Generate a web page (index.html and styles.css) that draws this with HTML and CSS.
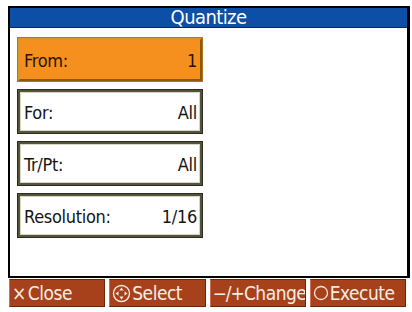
FILE: index.html
```html
<!DOCTYPE html>
<html>
<head>
<meta charset="utf-8">
<link rel="stylesheet" href="styles.css">
</head>
<body>
<div class="screen">
  <div class="window">
    <div class="title">Quantize</div>
    <div class="content">
      <div class="row selected"><span>From:</span><span>1</span></div>
      <div class="row"><span>For:</span><span>All</span></div>
      <div class="row"><span>Tr/Pt:</span><span>All</span></div>
      <div class="row"><span>Resolution:</span><span>1/16</span></div>
    </div>
  </div>
  <div class="footer">
    <div class="btn"><span class="x">×</span>Close</div>
    <div class="btn"><svg class="ico" width="19" height="19" viewBox="0 0 19 19"><circle cx="9.5" cy="9.5" r="8" fill="none" stroke="#f6e6dc" stroke-width="1.4"/><polygon points="9.5,3.5 7.3,6.5 11.7,6.5" fill="#f6e6dc"/><polygon points="9.5,15.5 7.3,12.5 11.7,12.5" fill="#f6e6dc"/><polygon points="3.5,9.5 6.5,7.3 6.5,11.7" fill="#f6e6dc"/><polygon points="15.5,9.5 12.5,7.3 12.5,11.7" fill="#f6e6dc"/></svg>Select</div>
    <div class="btn"><span class="pm">−/+</span>Change</div>
    <div class="btn"><svg class="ico" width="16" height="16" viewBox="0 0 16 16"><circle cx="8" cy="8" r="6.5" fill="none" stroke="#f6e6dc" stroke-width="1.3"/></svg>Execute</div>
  </div>
</div>
</body>
</html>
```
FILE: styles.css
```css
html, body {
  margin: 0;
  padding: 0;
  background: #ffffff;
}
body {
  font-family: "DejaVu Sans Condensed", "DejaVu Sans", "Liberation Sans Narrow", sans-serif;
}
.screen {
  margin: 6px 0 0 8px;
  width: 402px;
}
.window {
  border: 2px solid #000;
  border-right-width: 3px;
  height: 268px;
  background: #fff;
  display: flex;
  flex-direction: column;
}
.title {
  height: 19px;
  background: #0d4ea6;
  border-bottom: 1px solid #0a2a5a;
  color: #ffffff;
  font-size: 20px;
  line-height: 19px;
  text-align: center;
  letter-spacing: -0.6px;
}
.content {
  padding: 9px 0 0 7px;
  display: flex;
  flex-direction: column;
  gap: 7px;
}
.row {
  width: 173px;
  height: 38px;
  border: 3px solid #55543a;
  box-shadow: inset 0 0 0 1px #d8d6c0;
  outline: 1px solid #2a2a20;
  outline-offset: -1px;
  display: flex;
  align-items: center;
  justify-content: space-between;
  padding: 1px 3px 0 4px;
  box-sizing: content-box;
  font-size: 18px;
  letter-spacing: -0.3px;
  color: #141414;
}
.row.selected {
  background: #f5901f;
  border-color: #d29a2a #8a5a14 #8a5a14 #d29a2a;
  outline-color: #b07818;
  box-shadow: none;
  color: #2a1400;
}
.footer {
  display: flex;
  gap: 4px;
  margin: 1px 0 0 1px;
  width: 397px;
}
.btn {
  flex: 1;
  height: 26px;
  background: #a7411b;
  border: 1px solid #6e2408;
  border-left-color: #d07050;
  color: #f8ece4;
  font-size: 19px;
  line-height: 26px;
  letter-spacing: -0.5px;
  display: flex;
  align-items: center;
  padding-left: 2px;
  white-space: nowrap;
  overflow: hidden;
}
.x {
  font-size: 19px;
  margin-right: 2px;
  font-weight: 300;
}
.pm {
  letter-spacing: -1px;
}
.ico {
  margin-right: 1px;
  flex: none;
}
```
